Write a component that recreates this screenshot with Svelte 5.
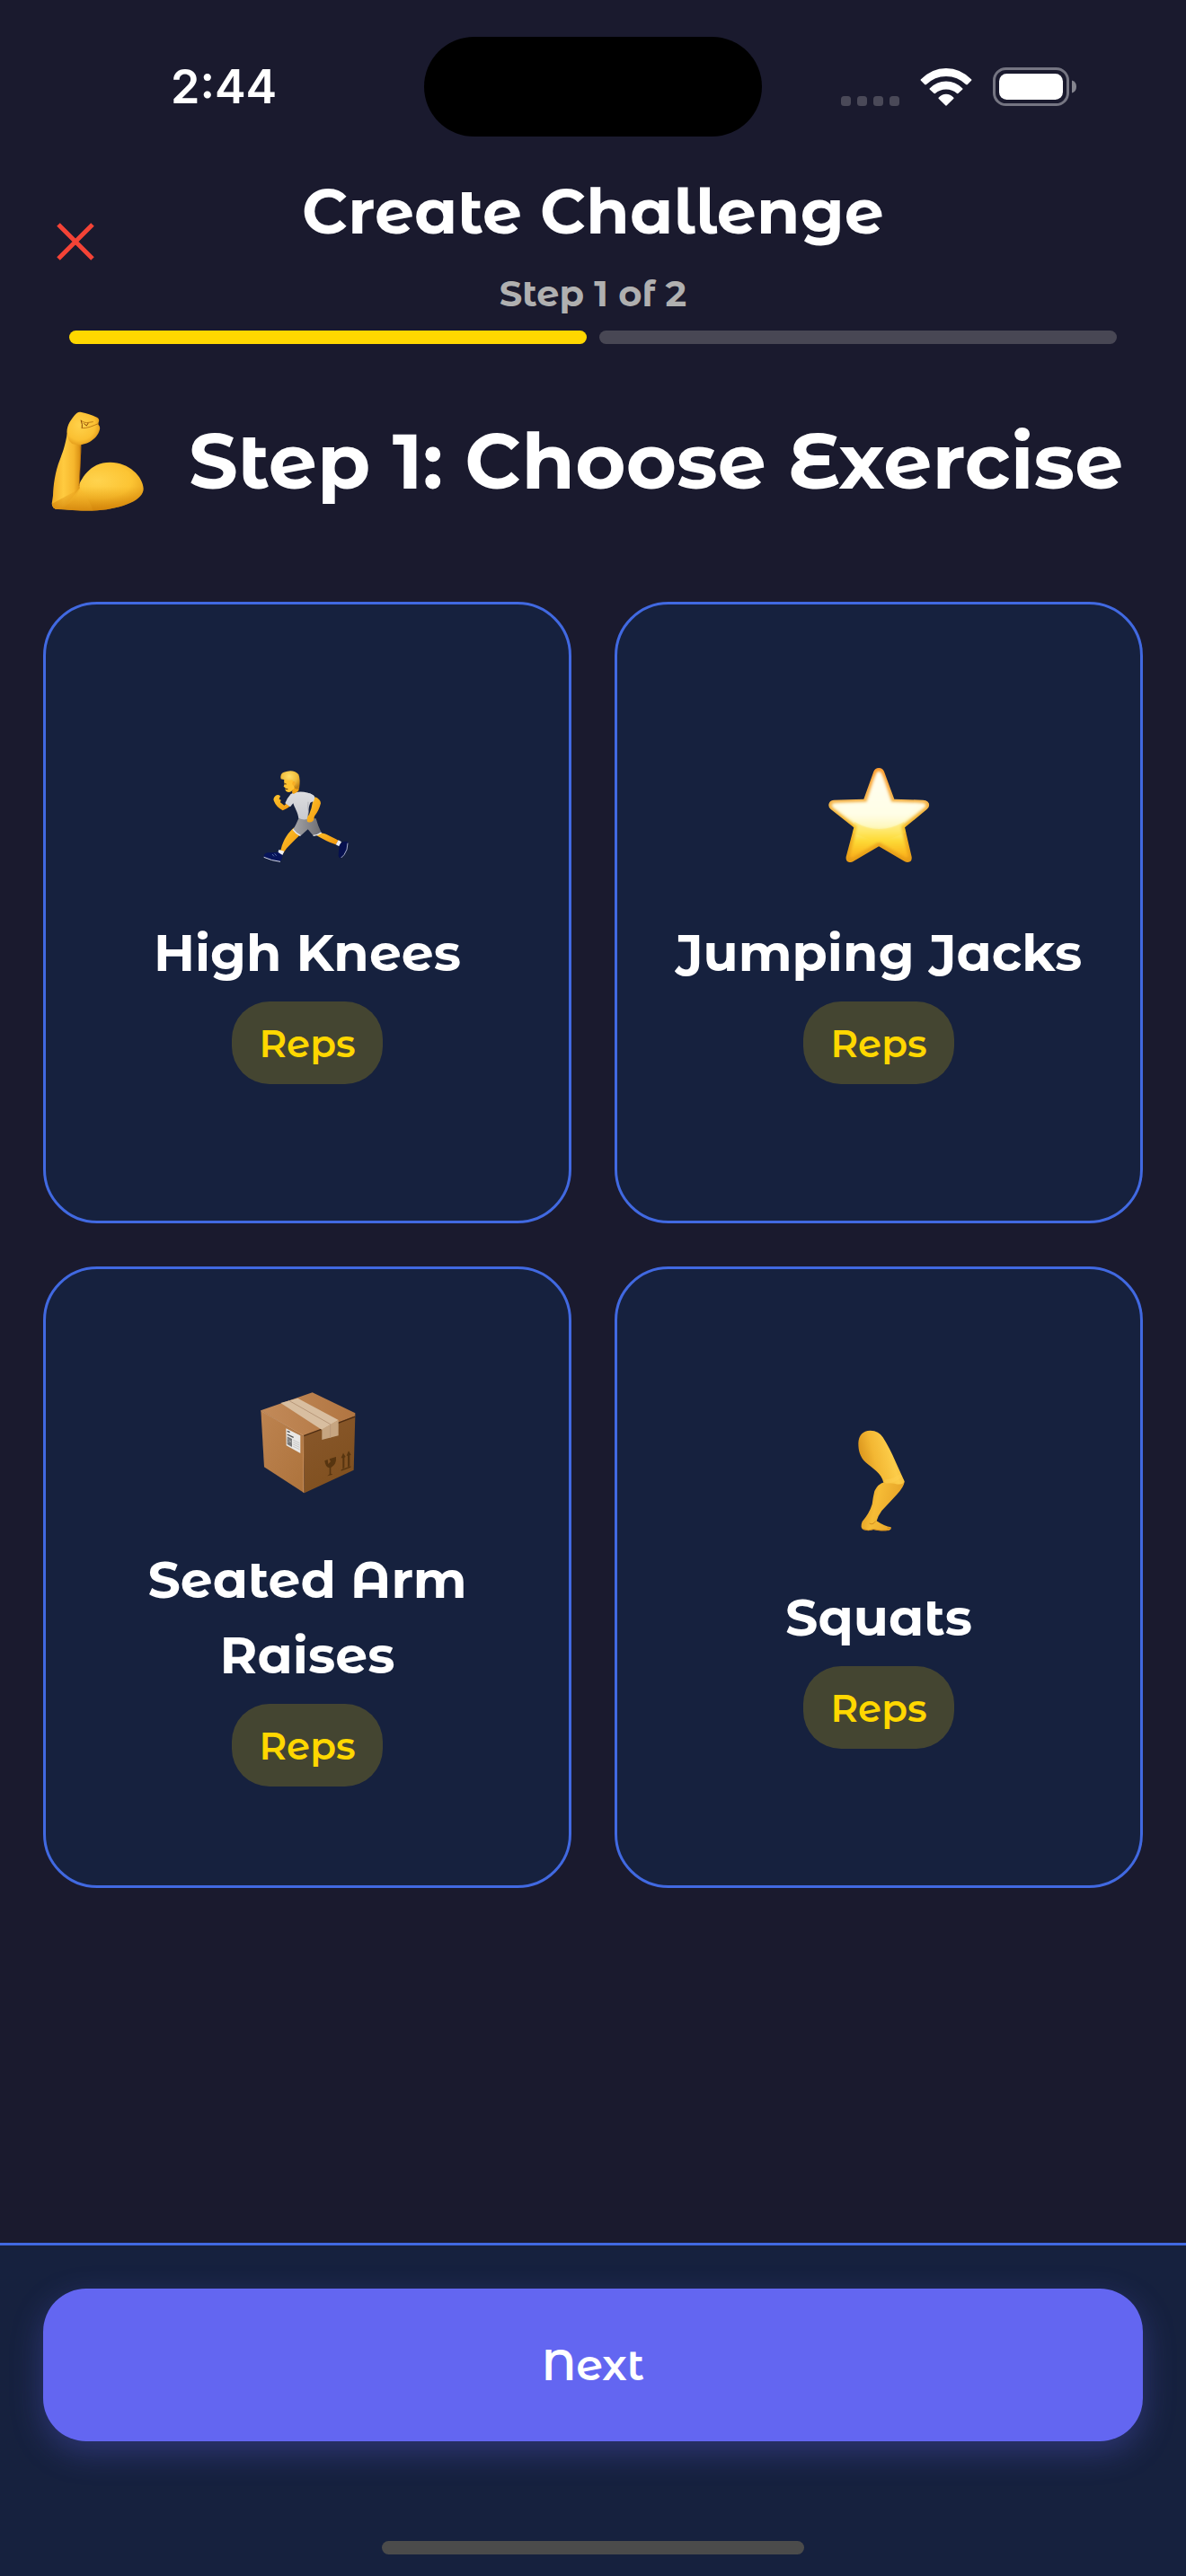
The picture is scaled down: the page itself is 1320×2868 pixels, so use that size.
<script>
  const exercises = [
    { name: 'High Knees', icon: 'runner', unit: 'Reps' },
    { name: 'Jumping Jacks', icon: 'star', unit: 'Reps' },
    { name: 'Seated Arm Raises', icon: 'box', unit: 'Reps' },
    { name: 'Squats', icon: 'leg', unit: 'Reps' }
  ];
  let selected = $state(null);
</script>

<div class="screen">
  <div class="status">
    <span class="time">2:44</span>
    <span class="island"></span>
    <span class="signals">
      <svg class="dots" width="65" height="42" viewBox="0 0 65 42" aria-hidden="true">
        <g fill="#4a4958">
          <rect x="0" y="31" width="11" height="11" rx="3.5" />
          <rect x="18" y="31" width="11" height="11" rx="3.5" />
          <rect x="36" y="31" width="11" height="11" rx="3.5" />
          <rect x="54" y="31" width="11" height="11" rx="3.5" />
        </g>
      </svg>
      <svg width="58" height="42" viewBox="374 105 173 127" aria-hidden="true">
        <g fill="#fff">
          <path d="M375 143Q412 105 460.500 105Q509 105 546 143Q547 145 546 146L532 160Q530 161 528 160Q499 132 460.500 132Q422 132 393 160Q391 161 389 160L375 146Q374 145 375 143Z" />
          <path d="M405 173Q429 149 460.500 149Q492 149 516 173Q517 175 516 176L501 190Q499 191 497 190Q482 176 460.500 176Q439 176 424 190Q422 191 420 190L405 176Q404 175 405 173Z" />
          <path d="M435 204Q446 192 460.500 192Q475 192 486 204Q487 206 486 207L462 230.500Q460.500 232 459 230.500L435 207Q434 206 435 204Z" />
        </g>
      </svg>
      <svg width="93" height="43" viewBox="0 0 93 43" aria-hidden="true">
        <rect x="1.500" y="1.500" width="82" height="40" rx="13" fill="none" stroke="#757582" stroke-width="3" />
        <rect x="7" y="7" width="71" height="29" rx="8.500" fill="#fff" />
        <path d="M88 14.500Q93 16 93 21.500Q93 27 88 28.500Z" fill="#85858f" />
      </svg>
    </span>
  </div>

  <header>
    <button class="close" aria-label="Close">
      <svg width="42" height="42" viewBox="0 0 42 42" aria-hidden="true">
        <path d="M2 2L40 40M40 2L2 40" stroke="#f44336" stroke-width="5" fill="none" />
      </svg>
    </button>
    <div class="titles">
      <h1>Create Challenge</h1>
      <p>Step 1 of 2</p>
    </div>
  </header>

  <div class="progress" role="progressbar" aria-label="Progress" aria-valuemin="0" aria-valuemax="2" aria-valuenow="1">
    <span class="done"></span>
    <span></span>
  </div>

  <main>
    <div class="heading">
      <svg width="120" height="120" viewBox="24 42 360 360" aria-hidden="true">
        <defs>
          <linearGradient id="armFore" x1="0" y1="0" x2="1" y2="0">
            <stop offset="0" stop-color="#f3ae25" />
            <stop offset=".4" stop-color="#ffcb40" />
            <stop offset=".75" stop-color="#f6b62c" />
            <stop offset="1" stop-color="#d58a10" />
          </linearGradient>
          <radialGradient id="armUpper" cx=".5" cy=".38" r=".62">
            <stop offset="0" stop-color="#ffd34e" />
            <stop offset=".6" stop-color="#fcc433" />
            <stop offset="1" stop-color="#e29a16" />
          </radialGradient>
          <radialGradient id="armFist" cx=".4" cy=".4" r=".65">
            <stop offset="0" stop-color="#ffd24b" />
            <stop offset=".7" stop-color="#fbc032" />
            <stop offset="1" stop-color="#e19818" />
          </radialGradient>
          <linearGradient id="armBase" x1="0" y1="0" x2="0" y2="1">
            <stop offset=".5" stop-color="#e09510" stop-opacity="0" />
            <stop offset="1" stop-color="#cf7f08" stop-opacity=".8" />
          </linearGradient>
        </defs>
        <path d="M136 318C150 280 178 224 248 224C310 224 358 272 359 312C360 350 290 378 205 385C160 388 110 382 72 381Q54 379 54 362Z" fill="url(#armUpper)" />
        <path d="M104 130C98 165 92 185 80 215C64 255 58 300 57 335L53 362Q54 380 73 380C105 375 130 350 147 312L145 300C144 260 152 210 151 163Z" fill="url(#armFore)" />
        <path d="M72 380C100 370 120 345 146 310Q180 350 190 385Q120 384 72 380Z" fill="#fdc437" opacity=".75" />
        <path d="M136 318C150 280 178 224 248 224C310 224 358 272 359 312C360 350 290 378 205 385C160 388 110 382 72 381Q54 379 54 362Z" fill="url(#armBase)" />
        <path d="M104 133C101 105 112 88 128 68C137 57 143 54 152 57C170 60 185 66 204 74Q214 80 209 91Q207 97 209 99Q217 107 211 121C204 139 192 149 178 157C160 166 142 169 120 161Q108 153 104 133Z" fill="url(#armFist)" />
        <path d="M150 84Q158 92 170 92L190 89M153 110Q165 111 180 106Q197 100 208 95" stroke="#b06a0c" stroke-width="3" opacity=".8" fill="none" stroke-linecap="round" />
        <path d="M151 85Q156 98 154 108M161 95L169 102L174 94" stroke="#874406" stroke-width="3" fill="none" stroke-linecap="round" stroke-linejoin="round" />
        <path d="M148 170Q150 230 144 303" stroke="#a9620a" stroke-width="3" opacity=".6" fill="none" />
      </svg>
      <h2>Step 1: Choose Exercise</h2>
    </div>

    <div class="grid">
      {#each exercises as item}
        <button class="card" aria-pressed={selected === item.name} onclick={() => (selected = item.name)}>
          <span class="icon">
            {#if item.icon === 'runner'}
              <svg width="112" height="112" viewBox="18 39 336 336" aria-hidden="true">
                <defs>
                  <linearGradient id="shirt" x1="0" y1="0" x2="0" y2="1">
                    <stop offset="0" stop-color="#dcdde0" />
                    <stop offset="1" stop-color="#c9cacf" />
                  </linearGradient>
                  <linearGradient id="shorts" x1="0" y1="0" x2="1" y2="0">
                    <stop offset="0" stop-color="#a5a5a8" />
                    <stop offset="1" stop-color="#6d6d72" />
                  </linearGradient>
                  <linearGradient id="skin" x1="0" y1="0" x2="1" y2="1">
                    <stop offset="0" stop-color="#ffc62f" />
                    <stop offset="1" stop-color="#f0960c" />
                  </linearGradient>
                  <radialGradient id="hair" cx=".45" cy=".3" r=".7">
                    <stop offset="0" stop-color="#ffdf69" />
                    <stop offset=".6" stop-color="#eebb3a" />
                    <stop offset="1" stop-color="#c18316" />
                  </radialGradient>
                </defs>
                <path d="M205 262C225 277 255 292 281 301L290 287C270 277 248 264 232 262L222 250Z" fill="url(#skin)" />
                <path d="M281 301L290 286L300 292L292 307Z" fill="#eeeef2" />
                <path d="M292 307Q298 290 316 290Q323 290 322 298Q321 322 309 336L299 346Q292 347 290 339Z" fill="#06104e" />
                <path d="M321 296Q321 320 309 335L299 345" stroke="#c5cbe0" stroke-width="2.500" fill="none" />
                <path d="M142 244C122 261 106 284 98 317L91 326L105 331C119 307 143 288 160 270Z" fill="url(#skin)" />
                <path d="M91 318L109 323L103 336L87 332Z" fill="#f0f0f4" />
                <path d="M41 338Q43 330 52 328Q76 327 88 326L103 336Q103 350 96 357Q67 355 41 343Z" fill="#07145a" />
                <path d="M41 343Q67 355 96 358" stroke="#d5d9e8" stroke-width="3" fill="none" />
                <path d="M69 333L75 340M77 331L83 338" stroke="#7f9bd0" stroke-width="2" />
                <path d="M157 214L215 214Q220 235 233 261Q223 269 207 272L188 250L163 272Q149 265 138 252Q149 234 157 214Z" fill="url(#shorts)" />
                <path d="M138 250Q148 264 163 271M233 261Q221 270 206 271" stroke="#ececf0" stroke-width="4" fill="none" />
                <path d="M118 163L109 170L96 160L98 152L92 149L96 139Q88 132 80 138Q70 147 75 156Q82 175 104 187Q117 182 132 170Z" fill="url(#skin)" />
                <path d="M131 132C150 121 184 121 207 137L214 152L196 161Q189 180 190 190L187 216Q172 219 157 214C155 193 143 177 139 163L129 175L112 163Q119 145 131 132Z" fill="url(#shirt)" />
                <path d="M187 216L190 190Q187 176 189 158" stroke="#a2a3a9" stroke-width="3" opacity=".7" fill="none" />
                <path d="M212 142Q230 149 231 163Q225 188 210 206L207 220Q198 231 186 224Q182 212 192 201Q201 179 204 158Z" fill="url(#skin)" />
                <path d="M190 130Q203 131 211 142L207 158L192 150Z" fill="#d9dade" />
                <path d="M135 127L137 112L156 106L158 119Q151 128 140 132Z" fill="#f3a313" />
                <path d="M109 83Q107 91 110 99L107 107L113 112L113 120Q121 130 133 123L145 110L146 84Z" fill="#ffc230" />
                <path d="M98 82Q94 64 108 59Q140 47 157 67Q164 85 159 113Q152 120 143 112L140 98L137 85Q118 88 98 82Z" fill="url(#hair)" />
                <ellipse cx="141" cy="97" rx="5" ry="8" fill="#f7ae24" />
                <path d="M110 98L116 99M114 115L121 116" stroke="#4c280a" stroke-width="3" />
              </svg>
            {:else if item.icon === 'star'}
              <svg width="112" height="112" viewBox="66 69 336 336" aria-hidden="true">
                <defs>
                  <linearGradient id="starBody" x1="0" y1="0" x2="0" y2="1">
                    <stop offset="0" stop-color="#ff9d2e" />
                    <stop offset=".35" stop-color="#f5b64e" />
                    <stop offset=".62" stop-color="#f2b526" />
                    <stop offset="1" stop-color="#e69a15" />
                  </linearGradient>
                  <linearGradient id="starGlow" x1="0" y1="0" x2="0" y2="1">
                    <stop offset="0" stop-color="#fffdf0" />
                    <stop offset=".5" stop-color="#fffde0" />
                    <stop offset=".68" stop-color="#fdf08a" />
                    <stop offset=".8" stop-color="#fddb36" />
                    <stop offset="1" stop-color="#fbae18" />
                  </linearGradient>
                  <filter id="starSoft" x="-10%" y="-10%" width="120%" height="120%">
                    <feGaussianBlur stdDeviation="5" />
                  </filter>
                  <clipPath id="starClip">
                    <path d="M217 87Q222 75 234.500 75Q247 75 252 87L286 179L382 182Q402 184 403 199Q402 207 395 213L321 274L344 372Q346 389 331 390Q325 390 320 387L234.500 337L149 387Q144 391 136 390Q123 388 125 372L151 274L74 213Q66 207 67 197Q69 184 84 182L184 179Z" />
                  </clipPath>
                </defs>
                <g clip-path="url(#starClip)">
                  <rect x="60" y="70" width="350" height="330" fill="url(#starBody)" />
                  <path d="M226 94Q234 80 243 94L276 189L380 192Q396 196 388 206L309 270L332 366Q333 379 320 373L234.500 322L149 373Q137 379 138 366L161 270L80 206Q73 194 88 192L194 189Z" fill="url(#starGlow)" filter="url(#starSoft)" />
                  <path d="M154 255Q234 303 318 255L330 290L234 325L142 290Z" fill="#ffdb35" opacity=".35" />
                  <path d="M217 110L234 86L252 110L276 189L370 194L317 254Q236 302 153 254L95 195L194 189Z" fill="#fffff0" opacity=".4" filter="url(#starSoft)" />
                </g>
              </svg>
            {:else if item.icon === 'box'}
              <svg width="112" height="112" viewBox="48 63 336 336" aria-hidden="true">
                <defs>
                  <linearGradient id="boxFront" x1="0" y1="0" x2="1" y2="1">
                    <stop offset="0" stop-color="#bd8350" />
                    <stop offset="1" stop-color="#ad733c" />
                  </linearGradient>
                  <linearGradient id="boxSide" x1="0" y1="0" x2=".5" y2="1">
                    <stop offset="0" stop-color="#89582c" />
                    <stop offset="1" stop-color="#80501f" />
                  </linearGradient>
                  <linearGradient id="boxTop" x1="0" y1="0" x2="1" y2="0">
                    <stop offset="0" stop-color="#c28a59" />
                    <stop offset="1" stop-color="#b17541" />
                  </linearGradient>
                </defs>
                <path d="M61 121L203 207L206 397L72 310Z" fill="url(#boxFront)" />
                <path d="M203 207L376 138L371 320L206 397Z" fill="url(#boxSide)" />
                <path d="M61 121L233 61L376 130L376 139L203 207Z" fill="url(#boxTop)" />
                <path d="M204 206L375 142" stroke="#4f2d11" stroke-width="4" />
                <path d="M61 122L203 205V395" stroke="#d39b68" stroke-width="2" fill="none" />
                <path d="M127 96L184 80L320 153L265 186Z" fill="#d8bea0" />
                <path d="M265 184L320 153V205L265 219Z" fill="#c6a581" />
                <path d="M155 88L293 167V212" stroke="#b8987a" stroke-width="3" fill="none" />
                <path d="M145 181L193 205V264L146 238Z" fill="#e9e8e6" />
                <path d="M149 190L158 194M149 201L170 211" stroke="#505050" stroke-width="4" />
                <path d="M149 208L165 216V243L149 234Z" fill="#777" />
                <path d="M150 214L164 230M151 227L164 222M169 220L190 230M169 227L190 237M169 234L190 244M169 241L190 251" stroke="#b5b5b5" stroke-width="2" />
                <path d="M274 289L284 285L286 300L294 292L290 283L312 276Q314 300 298 310L295 312V332L301 335L283 340L290 334V313Q276 310 274 289Z" fill="#573510" />
                <path d="M334 316V280H329L336 263L344 276L340 278V313ZM351 310V272H347L354 256L362 269L358 271V307ZM329 319L361 307V311L329 323Z" fill="#573510" />
              </svg>
            {:else}
              <svg width="112" height="112" viewBox="6 69 336 336" aria-hidden="true">
                <defs>
                  <linearGradient id="thigh" x1="0" y1=".6" x2="1" y2=".3">
                    <stop offset="0" stop-color="#d58e18" />
                    <stop offset=".35" stop-color="#f3b733" />
                    <stop offset=".7" stop-color="#fccc49" />
                    <stop offset="1" stop-color="#eab034" />
                  </linearGradient>
                  <linearGradient id="calf" x1="0" y1="0" x2="1" y2=".3">
                    <stop offset="0" stop-color="#d58b16" />
                    <stop offset=".45" stop-color="#f6bc36" />
                    <stop offset="1" stop-color="#e6a327" />
                  </linearGradient>
                </defs>
                <path d="M192 241Q172 246 160 270Q155 290 152 314Q143 344 119 372Q110 394 124 400Q140 405 156 399Q178 405 209 401Q217 399 215 391Q193 388 167 370Q171 354 184 336Q211 307 235 281Q257 258 260 240Q248 212 214 222Z" fill="url(#calf)" />
                <path d="M146 68Q174 68 188 91Q211 127 231 174L260 238Q254 253 226 245L190 242C184 211 151 193 131 175C111 155 106 135 106 110Q108 69 146 68Z" fill="url(#thigh)" />
                <path d="M200 238Q222 238 242 222" stroke="#ffd153" stroke-width="14" opacity=".45" fill="none" stroke-linecap="round" />
                <path d="M143 378Q153 385 164 371M203 394L214 394" stroke="#ba720e" stroke-width="3" opacity=".65" fill="none" />
                <path d="M121 397Q139 406 157 398Q180 405 209 401" stroke="#c67b10" stroke-width="3" opacity=".7" fill="none" />
              </svg>
            {/if}
          </span>
          <span class="name">{item.name}</span>
          <span class="unit">{item.unit}</span>
        </button>
      {/each}
    </div>
  </main>

  <footer>
    <button class="next">Next</button>
    <span class="home"></span>
  </footer>
</div>

<style>
  :global(body) {
    margin: 0;
    background: #1a1a2e;
  }
  .screen {
    min-height: 100vh;
    display: flex;
    flex-direction: column;
    background: #1a1a2e;
    color: #fff;
    font-family: 'Montserrat Alternates', Montserrat, Inter, sans-serif;
  }
  button {
    font-family: inherit;
    color: inherit;
    padding: 0;
    border: 0;
    background: none;
    cursor: pointer;
  }
  h1,
  h2,
  p {
    margin: 0;
  }
  svg {
    display: block;
    overflow: visible;
  }
  .status {
    display: grid;
    grid-template-columns: 1fr 376px 1fr;
    align-items: center;
    padding: 41px 0 34px;
  }
  .time {
    padding-left: 190px;
    font-family: Inter, sans-serif;
    font-size: 52px;
    line-height: 64px;
    font-weight: 600;
  }
  .island {
    height: 111px;
    border-radius: 56px;
    background: #000;
  }
  .signals {
    display: flex;
    justify-content: flex-end;
    align-items: center;
    gap: 23px;
    padding-right: 122px;
  }
  header {
    display: grid;
    grid-template-columns: 72px 1fr 72px;
    align-items: center;
    padding: 0 48px;
  }
  .close {
    height: 72px;
    display: grid;
    place-items: center;
  }
  .titles {
    text-align: center;
  }
  h1 {
    font-size: 70px;
    line-height: 98px;
    font-weight: 700;
  }
  p {
    margin-top: 18px;
    font-size: 40px;
    line-height: 50px;
    font-weight: 700;
    color: #b0b0b0;
  }
  .progress {
    display: grid;
    grid-template-columns: 1fr 1fr;
    gap: 14px;
    padding: 16px 77px 0;
  }
  .progress span {
    height: 15px;
    border-radius: 8px;
    background: #484754;
  }
  .progress .done {
    background: #ffd700;
  }
  main {
    flex: 1;
    padding: 71px 48px 48px;
  }
  .heading {
    display: flex;
    align-items: center;
    gap: 42px;
    margin-bottom: 96px;
  }
  .heading svg {
    flex: none;
  }
  h2 {
    font-size: 86px;
    line-height: 120px;
    font-weight: 700;
    white-space: nowrap;
  }
  .grid {
    display: grid;
    grid-template-columns: 1fr 1fr;
    gap: 48px;
  }
  .card {
    box-sizing: border-box;
    aspect-ratio: 0.85;
    display: flex;
    flex-direction: column;
    align-items: center;
    justify-content: center;
    padding: 0 48px;
    border: 3px solid #4169e1;
    border-radius: 60px;
    background: #16213e;
  }
  .icon {
    display: grid;
    place-items: center;
    height: 168px;
    margin-bottom: 26px;
  }
  .name {
    font-size: 57px;
    line-height: 84px;
    font-weight: 700;
  }
  .unit {
    margin-top: 12px;
    padding: 2px 30px 0;
    border-radius: 42px;
    background: rgba(255, 215, 0, 0.2);
    color: #ffd700;
    font-size: 42px;
    line-height: 90px;
    font-weight: 600;
  }
  footer {
    display: flex;
    flex-direction: column;
    align-items: center;
    padding: 48px 48px 24px;
    border-top: 3px solid #4169e1;
    background: #16213e;
  }
  .next {
    width: 100%;
    height: 170px;
    border-radius: 48px;
    background: #6366f1;
    box-shadow: 0 12px 36px rgba(99, 102, 241, 0.3);
    font-size: 48px;
    font-weight: 600;
  }
  .home {
    width: 470px;
    max-width: 100%;
    height: 15px;
    margin-top: 111px;
    border-radius: 8px;
    background: #4b4b4b;
  }
</style>
